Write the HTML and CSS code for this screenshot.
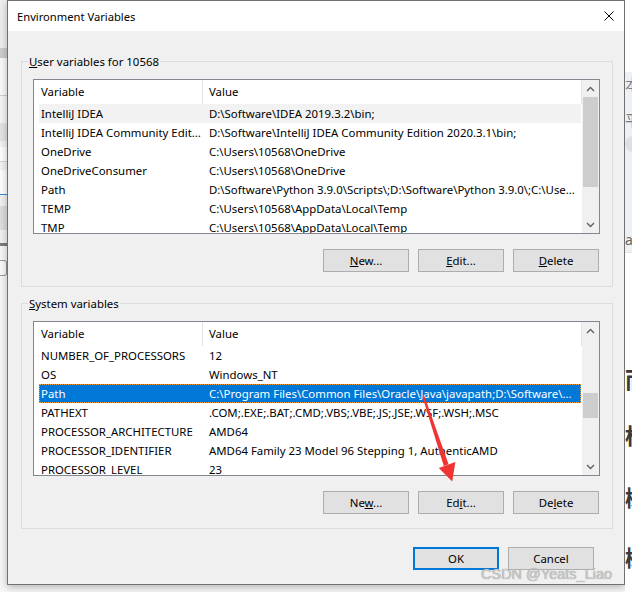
FILE: index.html
```html
<!DOCTYPE html>
<html>
<head>
<meta charset="utf-8">
<title>Environment Variables</title>
<link rel="stylesheet" href="styles.css">
</head>
<body>
<div class="screen">
  <div class="bg-left">
    <div class="bl b1"></div>
    <div class="bl b2"></div>
    <div class="bl b3"></div>
    <div class="bl b4"></div>
    <div class="bl b5"></div>
    <div class="bl b6"></div>
    <div class="bl b7"></div>
    <div class="bl b8"></div>
    <div class="bl b9"></div>
    <div class="bl b10"></div>
    <div class="bl b11"></div>
    <div class="bl b12"></div>
    <div class="bl b13"></div>
    <div class="bl b14"></div>
  </div>

  <div class="dialog">
    <div class="titlebar">
      <span class="title">Environment Variables</span>
      <svg class="close" width="10" height="10" viewBox="0 0 10 10"><path d="M0.5 0.5 L9.5 9.5 M9.5 0.5 L0.5 9.5" stroke="#000" stroke-width="1" fill="none"/></svg>
    </div>
    <div class="client">
      <fieldset class="group group-user">
        <legend><u>U</u>ser variables for 10568</legend>
        <div class="group-body">
          <div class="listview">
            <div class="lv-main">
              <div class="lv-header"><div class="h1">Variable</div><div class="h2">Value</div></div>
              <div class="row hot"><div class="c1">IntelliJ IDEA</div><div class="c2">D:\Software\IDEA 2019.3.2\bin;</div></div>
              <div class="row"><div class="c1">IntelliJ IDEA Community Edit...</div><div class="c2">D:\Software\IntelliJ IDEA Community Edition 2020.3.1\bin;</div></div>
              <div class="row"><div class="c1">OneDrive</div><div class="c2">C:\Users\10568\OneDrive</div></div>
              <div class="row"><div class="c1">OneDriveConsumer</div><div class="c2">C:\Users\10568\OneDrive</div></div>
              <div class="row"><div class="c1">Path</div><div class="c2">D:\Software\Python 3.9.0\Scripts\;D:\Software\Python 3.9.0\;C:\Use...</div></div>
              <div class="row"><div class="c1">TEMP</div><div class="c2">C:\Users\10568\AppData\Local\Temp</div></div>
              <div class="row"><div class="c1">TMP</div><div class="c2">C:\Users\10568\AppData\Local\Temp</div></div>
            </div>
            <div class="scrollbar">
              <div class="sb-btn"><svg width="9" height="6" viewBox="0 0 9 6"><path d="M1 5 L4.5 1.5 L8 5" stroke="#606060" stroke-width="1.4" fill="none"/></svg></div>
              <div class="sb-track"><div class="thumb thumb-user"></div></div>
              <div class="sb-btn"><svg width="9" height="6" viewBox="0 0 9 6"><path d="M1 1 L4.5 4.5 L8 1" stroke="#606060" stroke-width="1.4" fill="none"/></svg></div>
            </div>
          </div>
          <div class="btn-row">
            <button class="btn"><u>N</u>ew...</button>
            <button class="btn"><u>E</u>dit...</button>
            <button class="btn"><u>D</u>elete</button>
          </div>
        </div>
      </fieldset>

      <fieldset class="group group-sys">
        <legend><u>S</u>ystem variables</legend>
        <div class="group-body">
          <div class="listview">
            <div class="lv-main">
              <div class="lv-header"><div class="h1">Variable</div><div class="h2">Value</div></div>
              <div class="row"><div class="c1">NUMBER_OF_PROCESSORS</div><div class="c2">12</div></div>
              <div class="row"><div class="c1">OS</div><div class="c2">Windows_NT</div></div>
              <div class="row selected"><div class="c1">Path</div><div class="c2">C:\Program Files\Common Files\Oracle\Java\javapath;D:\Software\...</div></div>
              <div class="row"><div class="c1">PATHEXT</div><div class="c2">.COM;.EXE;.BAT;.CMD;.VBS;.VBE;.JS;.JSE;.WSF;.WSH;.MSC</div></div>
              <div class="row"><div class="c1">PROCESSOR_ARCHITECTURE</div><div class="c2">AMD64</div></div>
              <div class="row"><div class="c1">PROCESSOR_IDENTIFIER</div><div class="c2">AMD64 Family 23 Model 96 Stepping 1, AuthenticAMD</div></div>
              <div class="row"><div class="c1">PROCESSOR_LEVEL</div><div class="c2">23</div></div>
            </div>
            <div class="scrollbar">
              <div class="sb-btn"><svg width="9" height="6" viewBox="0 0 9 6"><path d="M1 5 L4.5 1.5 L8 5" stroke="#606060" stroke-width="1.4" fill="none"/></svg></div>
              <div class="sb-track"><div class="thumb thumb-sys"></div></div>
              <div class="sb-btn"><svg width="9" height="6" viewBox="0 0 9 6"><path d="M1 1 L4.5 4.5 L8 1" stroke="#606060" stroke-width="1.4" fill="none"/></svg></div>
            </div>
          </div>
          <div class="btn-row">
            <button class="btn">Ne<u>w</u>...</button>
            <button class="btn">Ed<u>i</u>t...</button>
            <button class="btn">De<u>l</u>ete</button>
          </div>
        </div>
      </fieldset>

      <div class="dlg-buttons">
        <button class="btn btn-default">OK</button>
        <button class="btn">Cancel</button>
      </div>
    </div>
  </div>

  <div class="bg-right">
    <div class="rs-top"></div>
    <div class="rs-panel">
      <div class="rs-ch c-a">本</div>
      <div class="rs-ch c-b">平</div>
      <div class="rs-dot"></div>
      <div class="rs-ch c-c">a</div>
    </div>
    <div class="rs-line"></div>
    <div class="rs-bold r1">而</div>
    <div class="rs-bold r2">标</div>
    <div class="rs-bold r3">树</div>
    <div class="rs-bold r4">树</div>
  </div>
</div>

<svg class="arrow" width="632" height="592" viewBox="0 0 632 592">
  <polygon points="422.6,397.2 424.6,396.6 448.6,464.2 443.8,466" fill="#f03434"/>
  <polygon points="438.8,468 455.4,462 452.2,481.5" fill="#f03434"/>
</svg>
<div class="watermark">CSDN @Yeats_Liao</div>
</body>
</html>
```
FILE: styles.css
```css
* { box-sizing: border-box; }
html, body { margin: 0; padding: 0; }
body {
  width: 632px;
  height: 592px;
  overflow: hidden;
  position: relative;
  background: #f6f6f6;
  font-family: "Noto Sans", "Liberation Sans", sans-serif;
  font-size: 11.4px;
  color: #000;
}
.screen { display: flex; height: 592px; }

/* background window strips */
.bg-left { width: 7px; flex: none; display: flex; flex-direction: column; background: #f7f7f7; }
.bl { flex: none; }
.b1 { height: 48px; background: #efefef; }
.b2 { height: 10px; background: #cdcdcd; }
.b3 { height: 37px; background: #fafafa; }
.b4 { height: 1px; background: #cfcfcf; }
.b5 { height: 27px; background: #f6f6f6; }
.b6 { height: 18px; background: #e4e4e4; }
.b7 { height: 6px; background: #f4f4f4; }
.b8 { height: 15px; background: #ffffff; border-bottom: 1px solid #d6d6d6; }
.b9 { height: 8px; background: #f3f3f3; }
.b10 { height: 25px; background: #ffffff; border-bottom: 1px solid #3d8ed6; }
.b11 { height: 11px; background: #f1f1f1; }
.b12 { height: 24px; background: #dedede; }
.b13 { height: 16px; background: #f2f2f2; border-bottom: 3px solid #7c7c7c; }
.b14 { height: 16px; margin-top: 14px; border: 1px solid #9a9a9a; border-left: none; border-radius: 0 3px 3px 0; background: #fafafa; }

.bg-right { width: 7px; flex: none; overflow: hidden; background: #fff; display: flex; flex-direction: column; }
.rs-top { height: 72px; flex: none; }
.rs-panel { height: 180px; flex: none; background: #edf0f4; display: flex; flex-direction: column; }
.rs-ch { font-family: "Noto Sans CJK SC", "Noto Sans", sans-serif; font-size: 15px; line-height: 20px; color: #7a7d82; flex: none; }
.c-a { margin-top: 2px; }
.c-b { margin-top: 16px; }
.rs-dot { width: 16px; height: 16px; border-radius: 8px; background: #dcdfe4; margin-top: 6px; flex: none; }
.c-c { margin-top: 78px; font-family: "Noto Sans", sans-serif; font-size: 14px; color: #666; }
.rs-line { height: 1px; background: #e4e4e4; flex: none; }
.rs-bold { font-family: "Noto Sans CJK SC", sans-serif; font-weight: 700; font-size: 22px; line-height: 26px; color: #3a3a3a; flex: none; }
.r1 { margin-top: 112px; }
.r2 { margin-top: 30px; }
.r3 { margin-top: 36px; }
.r4 { margin-top: 34px; }

/* dialog */
.dialog {
  width: 618px;
  height: 585px;
  flex: none;
  border: 1px solid #707070;
  background: #f0f0f0;
  display: flex;
  flex-direction: column;
  box-shadow: 0 2px 8px rgba(0, 0, 0, 0.28);
}
.titlebar {
  height: 30px;
  flex: none;
  background: #fff;
  display: flex;
  align-items: center;
}
.title { flex: 1; padding-left: 9px; font-size: 11.2px; }
.close { margin-right: 10px; margin-top: -1px; }

.client { flex: 1; display: flex; flex-direction: column; }

.group {
  width: 592px;
  min-width: 0;
  margin: 0 0 0 13px;
  border: 1px solid #dcdcdc;
  padding: 10px 12px 14px 6px;
}
.group-user { margin-top: 23px; }
.group-sys { margin-top: 9px; }
.group legend {
  padding: 0 1px;
  margin: 0;
  line-height: 15px;
  height: 15px;
  font-size: 11.4px;
}
.group-body { margin-left: 5px; }

.listview {
  width: 567px;
  height: 155px;
  border: 1px solid #828790;
  background: #fff;
  display: flex;
}
.lv-main { flex: 1; min-width: 0; overflow: hidden; }
.lv-header { display: flex; height: 24px; line-height: 24px; }
.h1 { width: 169px; padding-left: 7px; border-right: 1px solid #e5e5e5; flex: none; }
.h2 { flex: 1; padding-left: 6px; border-right: 1px solid #e5e5e5; }

.row {
  display: flex;
  height: 19px;
  line-height: 19px;
  margin: 0 1px 0 5px;
  white-space: nowrap;
}
.row .c1 { width: 168px; flex: none; padding-left: 2px; overflow: hidden; text-overflow: ellipsis; }
.row .c2 { flex: 1; min-width: 0; padding-left: 2px; overflow: hidden; text-overflow: ellipsis; }
.row.hot { background: #f2f2f2; }
.row.selected {
  background: #0078d7;
  color: #fff;
  outline: 1px dotted #f29a2e;
  outline-offset: -1px;
}

.scrollbar { width: 17px; flex: none; background: #f0f0f0; display: flex; flex-direction: column; }
.sb-btn { height: 17px; flex: none; display: flex; align-items: center; justify-content: center; }
.sb-track { flex: 1; display: flex; flex-direction: column; }
.thumb { margin: 0 1px; background: #cdcdcd; flex: none; }
.thumb-user { height: 90px; }
.thumb-sys { height: 25px; margin-top: 54px; }

.btn-row {
  display: flex;
  justify-content: flex-end;
  gap: 9px;
  margin-top: 15px;
  padding-right: 1px;
}
.btn {
  width: 86px;
  height: 23px;
  padding: 0;
  margin: 0;
  background: #e1e1e1;
  border: 1px solid #adadad;
  border-radius: 0;
  font-family: inherit;
  font-size: 11.4px;
  line-height: 21px;
  color: #000;
  text-align: center;
}
.dlg-buttons {
  display: flex;
  justify-content: flex-end;
  gap: 9px;
  margin-top: 18px;
  padding-right: 30px;
}
.btn-default { border: 2px solid #0078d7; line-height: 19px; }

/* overlays */
.arrow { position: absolute; left: 0; top: 0; pointer-events: none; }
.watermark {
  position: absolute;
  left: 481px;
  top: 565px;
  font-family: "Liberation Sans", sans-serif;
  font-size: 14.5px;
  line-height: 18px;
  color: #c8c8c8;
  text-shadow: 0 0 1px #8a8a8a;
  white-space: nowrap;
}
```
